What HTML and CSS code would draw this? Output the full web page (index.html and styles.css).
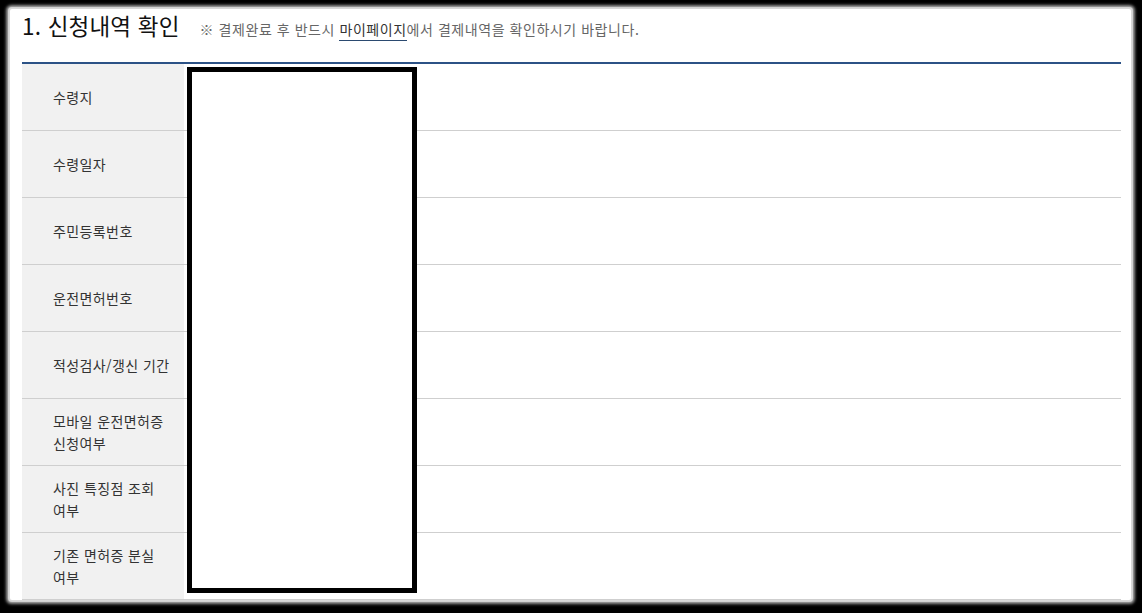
FILE: index.html
```html
<!DOCTYPE html>
<html lang="ko">
<head>
<meta charset="utf-8">
<title>신청내역 확인</title>
<link rel="stylesheet" href="styles.css">
</head>
<body>
<div class="panel">
  <div class="header">
    <h2 class="title">1. 신청내역 확인</h2>
    <p class="notice">※ 결제완료 후 반드시 <span class="link">마이페이지</span>에서 결제내역을 확인하시기 바랍니다.</p>
  </div>
  <div class="table">
    <div class="row"><div class="label">수령지</div><div class="value"></div></div>
    <div class="row"><div class="label">수령일자</div><div class="value"></div></div>
    <div class="row"><div class="label">주민등록번호</div><div class="value"></div></div>
    <div class="row"><div class="label">운전면허번호</div><div class="value"></div></div>
    <div class="row"><div class="label">적성검사/갱신 기간</div><div class="value"></div></div>
    <div class="row"><div class="label">모바일 운전면허증 신청여부</div><div class="value"></div></div>
    <div class="row"><div class="label">사진 특징점 조회 여부</div><div class="value"></div></div>
    <div class="row"><div class="label">기존 면허증 분실 여부</div><div class="value"></div></div>
    <div class="redact"></div>
  </div>
</div>
</body>
</html>
```

FILE: styles.css
```css
html, body {
  margin: 0;
  padding: 0;
  background: #000;
  height: 613px;
  overflow: hidden;
  font-family: "Noto Sans CJK KR", "Noto Sans", sans-serif;
}

.panel {
  margin: 9px 11px 0 10px;
  height: 591px;
  background: #fff;
  padding: 0 10px 0 12px;
  box-sizing: border-box;
  overflow: hidden;
  box-shadow: 0 0 1px 2px #d8d8d8, 0 0 3px 4px #9a9a9a;
  border-radius: 2px;
}

.header {
  height: 53px;
  display: flex;
  align-items: baseline;
  padding-top: 0;
  box-sizing: border-box;
}

.title {
  margin: 0;
  font-size: 22.5px;
  font-weight: 400;
  color: #111;
  line-height: 32px;
  letter-spacing: 0.2px;
}

.notice {
  margin: 0 0 0 20px;
  font-size: 14px;
  color: #666;
  letter-spacing: 0.55px;
}

.link {
  color: #333;
  border-bottom: 1px solid #2b4a70;
  padding-bottom: 1px;
}

.table {
  position: relative;
  border-top: 2px solid #2c5286;
}

.row {
  display: flex;
  height: 67px;
  border-bottom: 1px solid #cfcfcf;
  box-sizing: border-box;
}

.label {
  width: 162px;
  flex: none;
  background: #f1f1f1;
  display: flex;
  align-items: center;
  padding: 0 9px 0 31px;
  box-sizing: border-box;
  font-size: 14px;
  line-height: 22px;
  color: #333;
  letter-spacing: 0.4px;
  word-break: keep-all;
}

.value {
  flex: 1;
  background: #fff;
}

.redact {
  position: absolute;
  left: 165px;
  top: 3px;
  width: 230px;
  height: 526px;
  border: 5px solid #000;
  background: #fff;
  box-sizing: border-box;
}
```
